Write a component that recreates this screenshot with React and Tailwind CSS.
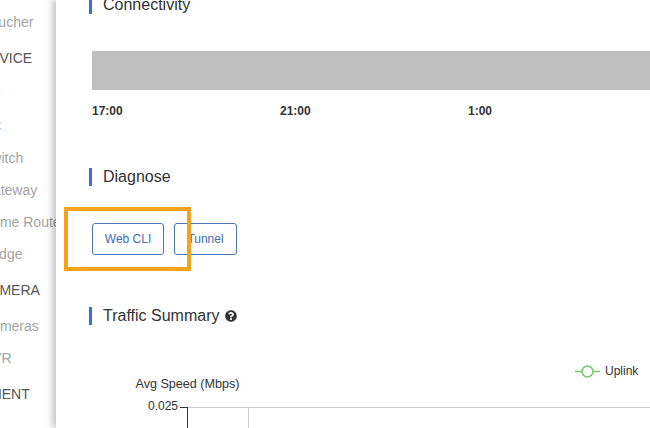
import React from 'react';
import { FaQuestionCircle } from 'react-icons/fa';

const navItems = [
  { label: 'Voucher', kind: 'item' },
  { label: 'DEVICE', kind: 'head' },
  { label: 'AP', kind: 'item' },
  { label: 'AC', kind: 'item' },
  { label: 'Switch', kind: 'item' },
  { label: 'Gateway', kind: 'item' },
  { label: 'Home Router', kind: 'item' },
  { label: 'Bridge', kind: 'item' },
  { label: 'CAMERA', kind: 'head' },
  { label: 'Cameras', kind: 'item' },
  { label: 'NVR', kind: 'item' },
  { label: 'CLIENT', kind: 'head' },
];

const SectionTitle = ({ children }) => (
  <div className="-ml-[3px] flex items-center border-l-[3px] border-[#3b6fd1] pl-[11px] text-[16px] leading-[18px] text-[#333]">
    {children}
  </div>
);

const App = () => {
  return (
    <div className="flex h-[428px] w-[650px] overflow-hidden bg-white font-['Liberation_Sans',Arial,sans-serif]">
      {/* sidebar, scrolled so the labels are cut on the left */}
      <aside className="w-[56px] shrink-0 overflow-hidden bg-white pt-[6px]">
        <ul className="-ml-[18px] whitespace-nowrap text-[14px]">
          {navItems.map((item) => (
            <li
              key={item.label}
              className={
                item.kind === 'head'
                  ? '-ml-[2px] flex h-[40px] items-center text-[#555]'
                  : 'flex h-[32px] items-center text-[#a3a3a3]'
              }
            >
              {item.label}
            </li>
          ))}
        </ul>
      </aside>

      <main className="relative z-10 flex-1 bg-white pl-[36px] shadow-[-4px_0_6px_rgba(0,0,0,0.22)]">
        <div className="-mt-1">
          <SectionTitle>Connectivity</SectionTitle>
        </div>

        <div className="mt-[37px] h-[39px] w-[600px] bg-[#bfbfbf]" />
        <div className="mt-[14px] flex text-[12px] font-bold leading-[14px] text-[#333]">
          <span className="w-[188px]">17:00</span>
          <span className="w-[188px]">21:00</span>
          <span className="w-[188px]">1:00</span>
        </div>

        <div className="mt-[50px]">
          <SectionTitle>Diagnose</SectionTitle>
        </div>
        <div className="mt-[37px] flex gap-[10px]">
          <button className="h-[32px] w-[72px] rounded-[3px] border border-[#4a76b6] text-[12px] text-[#3e6db5]">
            Web CLI
          </button>
          <button className="h-[32px] w-[63px] rounded-[3px] border border-[#4a76b6] text-[12px] text-[#3e6db5]">
            Tunnel
          </button>
        </div>

        <div className="mt-[52px]">
          <SectionTitle>
            Traffic Summary
            <FaQuestionCircle className="ml-[6px] h-[12px] w-[12px] text-[#333]" />
          </SectionTitle>
        </div>

        <svg className="-ml-[36px] block" width="594" height="104" viewBox="0 0 594 104">
          <g fontFamily="'Liberation Sans', Arial, sans-serif" fill="#333">
            <text x="131.5" y="63" fontSize="12.6" textAnchor="middle">Avg Speed (Mbps)</text>
            <text x="122" y="85" fontSize="12" textAnchor="end">0.025</text>
            <text x="549" y="50" fontSize="12">Uplink</text>
          </g>
          <line x1="131" y1="82.5" x2="594" y2="82.5" stroke="#cccccc" />
          <line x1="192.5" y1="82" x2="192.5" y2="104" stroke="#cccccc" />
          <line x1="124" y1="82.5" x2="131" y2="82.5" stroke="#333" />
          <line x1="131.5" y1="82" x2="131.5" y2="104" stroke="#333" />
          <line x1="519" y1="46.5" x2="544" y2="46.5" stroke="#74c96a" strokeWidth="1.5" />
          <circle cx="531.5" cy="46.5" r="5.5" fill="#fff" stroke="#74c96a" strokeWidth="1.5" />
        </svg>

        {/* highlight annotation */}
        <div className="absolute left-[8px] top-[207px] h-[64px] w-[127px] border-4 border-[#f7a21b]" />
      </main>
    </div>
  );
};

export default App;
